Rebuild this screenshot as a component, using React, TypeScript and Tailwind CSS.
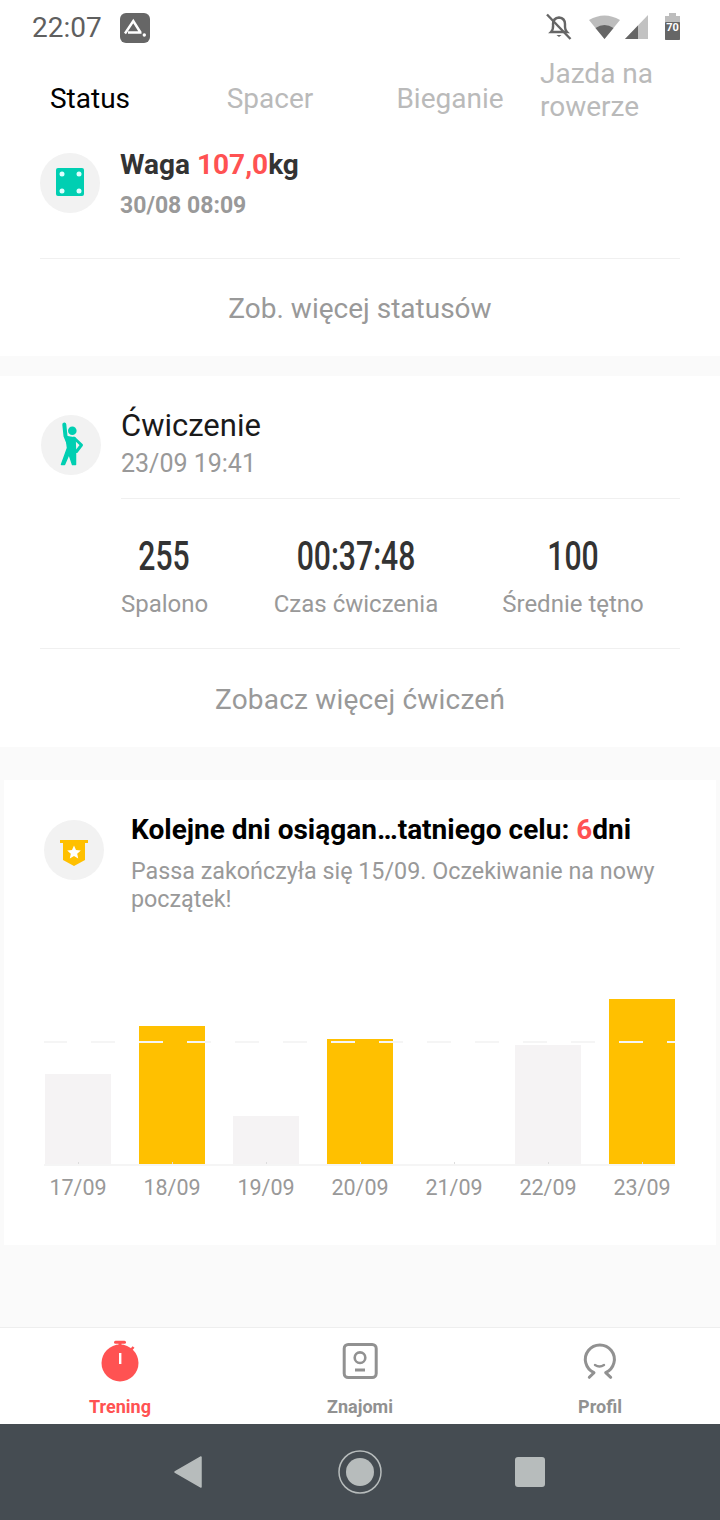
import React from 'react';

const font = { fontFamily: 'Roboto, "Noto Sans", sans-serif' };

const stats = [
  { value: '255', label: 'Spalono', box: 'w-[86px]' },
  { value: '00:37:48', label: 'Czas ćwiczenia', box: 'w-[166px] ml-[66px]' },
  { value: '100', label: 'Średnie tętno', box: 'w-[142px] ml-[63px]' },
];

const bars = [
  { label: '17/09', height: 'h-[90px]', hit: false },
  { label: '18/09', height: 'h-[138px]', hit: true },
  { label: '19/09', height: 'h-[48px]', hit: false },
  { label: '20/09', height: 'h-[125px]', hit: true },
  { label: '21/09', height: 'h-0', hit: false },
  { label: '22/09', height: 'h-[119px]', hit: false },
  { label: '23/09', height: 'h-[165px]', hit: true },
];

const dashes = Array.from({ length: 14 }, (_, i) => i);

const StatusBar = () => (
  <div className="h-[56px] bg-white flex items-center pl-[32px] pr-[40px]">
    <span className="text-[28px] leading-none text-[#5f5f5f]">22:07</span>
    <svg className="ml-[18px]" width="30" height="30" viewBox="0 0 30 30">
      <rect width="30" height="30" rx="6" fill="#666" />
      <path d="M5 20.500 L13.300 8 L20.500 19.500 M8 19.500 H21.500" fill="none" stroke="#fff" strokeWidth="2.400" />
      <circle cx="24.300" cy="22" r="1.700" fill="#fff" />
    </svg>
    <div className="ml-auto flex items-center -mt-[3px]">
      <svg width="26" height="28" viewBox="0 0 26 28">
        <path d="M5 19 C8 16 7 13 7 11 C7 7 9 5 13 4.500 C17 5 19 7 19 11 V14 C19 17 20 18 21 19 H5 Z" fill="none" stroke="#666" strokeWidth="2.400" />
        <path d="M10.500 22 H15.500 L13 24 Z" fill="#666" />
        <path d="M1 1.500 L24.500 26" stroke="#666" strokeWidth="2.400" />
      </svg>
      <svg className="ml-[17px]" width="31" height="25" viewBox="0 0 31 25">
        <path d="M0 6 Q15.500 -3 31 6 L15.500 25 Z" fill="#bdbdbd" />
        <path d="M6.500 14 Q15.500 8 24.500 14 L15.500 25 Z" fill="#666" />
      </svg>
      <svg className="ml-[5px]" width="23" height="24" viewBox="0 0 23 24">
        <path d="M0 24 L23 0 V24 Z" fill="#c2c2c2" />
        <path d="M0 24 L13 10.500 V24 Z" fill="#666" />
      </svg>
      <svg className="ml-[17px]" width="15" height="27" viewBox="0 0 15 27">
        <path d="M4 0 H11 V3 H15 V27 H0 V3 H4 Z" fill="#bdbdbd" />
        <rect y="9" width="15" height="18" rx="1" fill="#666" />
        <text x="7.500" y="18" textAnchor="middle" fontSize="11" fontWeight="700" fill="#fff" fontFamily="Roboto, sans-serif">70</text>
      </svg>
    </div>
  </div>
);

const Tabs = () => (
  <div className="h-[84px] bg-white grid grid-cols-[180px_180px_180px_180px] items-center text-[28px] leading-[33px] text-[#bababa]">
    <div className="text-center text-black">Status</div>
    <div className="text-center">Spacer</div>
    <div className="text-center">Bieganie</div>
    <div className="text-left w-[130px] -mt-[16px]">Jazda na rowerze</div>
  </div>
);

const Avatar = ({ children }: { children: React.ReactNode }) => (
  <svg className="shrink-0" width="60" height="60" viewBox="0 0 60 60">
    <circle cx="30" cy="30" r="30" fill="#f2f2f2" />
    {children}
  </svg>
);

const StatusCard = () => (
  <section className="bg-white h-[216px] px-[40px]">
    <div className="flex h-[119px] border-b border-[#f0f0f0] pt-[13px]">
      <Avatar>
        <rect x="16" y="15" width="28" height="28" rx="2" fill="#00cfb2" />
        <circle cx="22" cy="21" r="2.500" fill="#dff" />
        <circle cx="39" cy="21" r="2.500" fill="#dff" />
        <circle cx="22" cy="38" r="2.500" fill="#dff" />
        <circle cx="39" cy="38" r="2.500" fill="#dff" />
      </Avatar>
      <div className="ml-[20px] -mt-[6px]">
        <div className="text-[28px] leading-[36px] font-bold text-[#333]">
          Waga <span className="text-[#ff5252]">107,0</span>kg
        </div>
        <div className="text-[23px] leading-[32px] mt-[7px] font-bold text-[#999]">30/08 08:09</div>
      </div>
    </div>
    <div className="h-[97px] pt-[3px] flex items-center justify-center text-[28px] text-[#999]">Zob. więcej statusów</div>
  </section>
);

const WorkoutCard = () => (
  <section className="bg-white h-[371px] mt-[20px] px-[40px]">
    <div className="flex pt-[39px]">
      <div className="ml-[1px]">
        <Avatar>
          <circle cx="31.300" cy="15.700" r="4.300" fill="#00cfb2" />
          <path d="M23.300 9.500 L24.500 21 L27 27" fill="none" stroke="#00cfb2" strokeWidth="4" strokeLinecap="round" strokeLinejoin="round" />
          <path d="M33 23 L40.500 30 L35.500 36.500" fill="none" stroke="#00cfb2" strokeWidth="3" strokeLinecap="round" strokeLinejoin="round" />
          <path d="M25 21.500 L34 23 L34.500 36 L34.500 49.500 L31.500 49.500 L28 39 L23.500 49.500 L20.500 49.500 L26.500 33 Z" fill="#00cfb2" stroke="#00cfb2" strokeWidth="1.500" strokeLinejoin="round" />
        </Avatar>
      </div>
      <div className="ml-[20px] -mt-[7px] flex-1">
        <div className="text-[31px] leading-[36px] text-[#1a1a1a]">Ćwiczenie</div>
        <div className="text-[25px] leading-[32px] mt-[4px] text-[#999] pb-[18px] border-b border-[#f0f0f0]">23/09 19:41</div>
      </div>
    </div>
    <div className="flex h-[150px] pl-[81px] border-b border-[#f0f0f0]">
      {stats.map((s) => (
        <div key={s.label} className={`flex-none pt-[33px] text-center ${s.box}`}>
          <div className="text-[41px] leading-[48px] font-medium text-[#333] scale-x-[0.735] whitespace-nowrap">{s.value}</div>
          <div className="text-[24px] leading-[32px] mt-[8px] text-[#999] whitespace-nowrap">{s.label}</div>
        </div>
      ))}
    </div>
    <div className="h-[98px] pt-[4px] flex items-center justify-center text-[28px] tracking-[0.2px] text-[#999]">Zobacz więcej ćwiczeń</div>
  </section>
);

const StreakChart = () => (
  <div className="relative mt-[68px] ml-[40px] w-[631px]">
    <div className="flex gap-[28px] h-[185px] items-end border-b-2 border-[#f5f5f5]">
      {bars.map((b) => (
        <div key={b.label} className={`relative w-[66px] ml-[1px] -mr-[1px] ${b.height} ${b.hit ? 'bg-[#ffc000]' : 'bg-[#f5f3f4]'}`}>
          <div className="absolute bottom-0 left-[33px] w-[1px] h-[2px] bg-[#ddd]" />
        </div>
      ))}
    </div>
    <div className="absolute left-0 top-[60px] w-[631px] flex gap-[24px] overflow-hidden">
      {dashes.map((d) => (
        <div key={d} className={`${d === 0 ? 'w-[23px]' : 'w-[24px]'} h-[2px] shrink-0 bg-[#f5f5f5]`} />
      ))}
    </div>
    <div className="flex gap-[28px] mt-[7px]">
      {bars.map((b) => (
        <div key={b.label} className="w-[66px] ml-[1px] -mr-[1px] text-center whitespace-nowrap text-[21.500px] leading-[30px] text-[#999]">{b.label}</div>
      ))}
    </div>
  </div>
);

const StreakCard = () => (
  <section className="bg-white h-[465px] mt-[33px] mx-[4px]">
    <div className="flex pt-[40px] pl-[40px]">
      <Avatar>
        <path d="M16 20 H44 V23 H41 V40 L30 46 L19 40 V23 H16 Z" fill="#ffc000" />
        <path d="M30 25.500 L32 30 L36.800 30.500 L33.200 33.800 L34.200 38.500 L30 36 L25.800 38.500 L26.800 33.800 L23.200 30.500 L28 30 Z" fill="#fff" />
      </Avatar>
      <div className="ml-[27px] -mt-[10px] w-[540px]">
        <div className="text-[28px] leading-[40px] font-bold text-black whitespace-nowrap">
          Kolejne dni osiągan…tatniego celu: <span className="text-[#ff5252]">6</span>dni
        </div>
        <div className="text-[23.300px] leading-[28px] mt-[7px] text-[#999]">Passa zakończyła się 15/09. Oczekiwanie na nowy początek!</div>
      </div>
    </div>
    <StreakChart />
  </section>
);

const BottomTabs = () => (
  <nav className="h-[97px] bg-white border-t border-[#eee] grid grid-cols-3 text-[18px] font-bold text-[#919191]">
    <div className="flex flex-col items-center pt-[12px]">
      <svg width="44" height="46" viewBox="0 0 44 46">
        <circle cx="22" cy="23" r="18.500" fill="#ff5252" />
        <rect x="16" y="0.700" width="12" height="3" rx="1.500" fill="#ff5252" />
        <rect x="20.500" y="3" width="3" height="3" fill="#ff5252" />
        <path d="M35.500 7 L32.500 10.500" stroke="#ff5252" strokeWidth="2.500" />
        <rect x="21" y="13" width="2.400" height="11" fill="#fff" />
      </svg>
      <span className="mt-[9px] leading-[24px] text-[#ff5252]">Trening</span>
    </div>
    <div className="flex flex-col items-center pt-[12px]">
      <svg width="44" height="46" viewBox="0 0 44 46">
        <rect x="6.200" y="4.500" width="32" height="33" rx="4" fill="none" stroke="#919191" strokeWidth="3" />
        <circle cx="22" cy="17.700" r="5.300" fill="none" stroke="#919191" strokeWidth="2.600" />
        <path d="M17 30 H27" stroke="#919191" strokeWidth="3" />
      </svg>
      <span className="mt-[9px] leading-[24px]">Znajomi</span>
    </div>
    <div className="flex flex-col items-center pt-[12px]">
      <svg width="44" height="46" viewBox="0 0 44 46">
        <path d="M11.300 37.300 L16 32.700 A14.500 14.500 0 1 1 27.700 32.700 L32.700 37.300" fill="none" stroke="#919191" strokeWidth="3" strokeLinecap="round" strokeLinejoin="round" />
        <path d="M17 25 Q21.500 28 26 25" fill="none" stroke="#919191" strokeWidth="2.400" strokeLinecap="round" />
      </svg>
      <span className="mt-[9px] leading-[24px]">Profil</span>
    </div>
  </nav>
);

const NavBar = () => (
  <div className="h-[96px] bg-[#454c52] flex items-center pl-[174px]">
    <svg width="28" height="32" viewBox="0 0 28 32">
      <path d="M1 16 L27 1 V31 Z" fill="#b7bcbc" stroke="#b7bcbc" strokeWidth="1.500" strokeLinejoin="round" />
    </svg>
    <svg className="ml-[136px]" width="44" height="44" viewBox="0 0 44 44">
      <circle cx="22" cy="22" r="21" fill="none" stroke="#b7bcbc" strokeWidth="1.500" />
      <circle cx="22" cy="22" r="14" fill="#b7bcbc" />
    </svg>
    <div className="ml-[133px] w-[30px] h-[30px] rounded-[3px] bg-[#b7bcbc]" />
  </div>
);

export default function App() {
  return (
    <div className="w-[720px] h-[1520px] bg-[#fafafa] flex flex-col overflow-hidden" style={font}>
      <StatusBar />
      <Tabs />
      <StatusCard />
      <WorkoutCard />
      <StreakCard />
      <div className="flex-1" />
      <BottomTabs />
      <NavBar />
    </div>
  );
}
